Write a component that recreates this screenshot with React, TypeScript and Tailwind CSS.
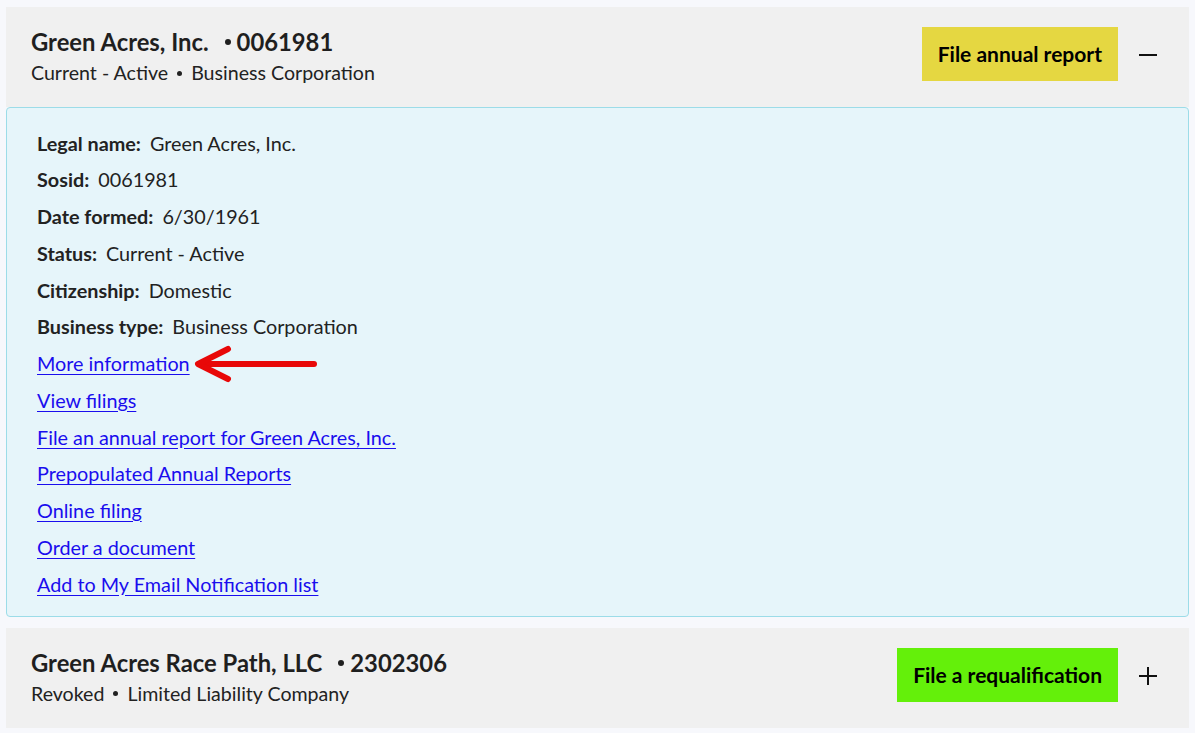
import { ReactNode } from 'react'

interface Entity {
  name: string
  sosid: string
  status: string
  type: string
  action: string
  actionClass: string
  open: boolean
}

const entities: Entity[] = [
  {
    name: 'Green Acres, Inc.',
    sosid: '0061981',
    status: 'Current - Active',
    type: 'Business Corporation',
    action: 'File annual report',
    actionClass: 'bg-[#e5d741]',
    open: true,
  },
  {
    name: 'Green Acres Race Path, LLC',
    sosid: '2302306',
    status: 'Revoked',
    type: 'Limited Liability Company',
    action: 'File a requalification',
    actionClass: 'bg-[#64f00a]',
    open: false,
  },
]

const details = [
  ['Legal name', 'Green Acres, Inc.'],
  ['Sosid', '0061981'],
  ['Date formed', '6/30/1961'],
  ['Status', 'Current - Active'],
  ['Citizenship', 'Domestic'],
  ['Business type', 'Business Corporation'],
]

const links = [
  'More information',
  'View filings',
  'File an annual report for Green Acres, Inc.',
  'Prepopulated Annual Reports',
  'Online filing',
  'Order a document',
  'Add to My Email Notification list',
]

function ToggleIcon({ open }: { open: boolean }) {
  return (
    <svg width="20" height="20" viewBox="0 0 20 20" className="text-[#111]">
      <line x1="1" y1="10" x2="19" y2="10" stroke="currentColor" strokeWidth="2" />
      {!open && <line x1="10" y1="1" x2="10" y2="19" stroke="currentColor" strokeWidth="2" />}
    </svg>
  )
}

function PointerArrow() {
  // red annotation arrow pointing left at the link
  return (
    <svg width="126" height="40" viewBox="0 0 126 40" className="absolute left-[100%] top-1/2 -translate-y-1/2 ml-[4px]">
      <g stroke="#e80808" strokeWidth="6" strokeLinecap="round" strokeLinejoin="round" fill="none">
        <line x1="6" y1="20" x2="120" y2="20" />
        <polyline points="34,5 4,20 34,35" />
      </g>
    </svg>
  )
}

function Row({ children }: { children: ReactNode }) {
  return <div className="h-[36.75px] flex items-center">{children}</div>
}

function EntityCard({ entity }: { entity: Entity }) {
  return (
    <div>
      <div className="bg-[#f0f0f0] flex items-start pl-[25px] pr-[31px] pt-[20px] h-[100px]">
        <div className="flex-1">
          <div className="flex items-center text-[23.8px] font-bold leading-[30px] text-[#1f1f1f]">
            <span>{entity.name}</span>
            <span className="ml-[16px] mr-[6px] w-[6px] h-[6px] rounded-full bg-current" />
            <span>{entity.sosid}</span>
          </div>
          <div className="flex items-center text-[19.6px] leading-[32px] text-[#222]">
            <span>{entity.status}</span>
            <span className="mx-[9px] w-[5px] h-[5px] rounded-full bg-current" />
            <span>{entity.type}</span>
          </div>
        </div>
        <button className={`${entity.actionClass} h-[54px] px-[16px] text-[21px] font-bold text-black`}>
          {entity.action}
        </button>
        <div className="ml-[20px] mt-[18px]">
          <ToggleIcon open={entity.open} />
        </div>
      </div>
      {entity.open && (
        <div className="bg-[#e6f5fa] border border-[#9cdce8] rounded-[4px] pl-[30px] pt-[17px] pb-[13px] text-[19.8px] text-[#222]">
          {details.map(([label, value]) => (
            <Row key={label}>
              <span className="font-bold mr-[9px]">{label}:</span>
              <span>{value}</span>
            </Row>
          ))}
          {links.map((link, i) => (
            <Row key={link}>
              <span className="relative">
                <a href="#" className="text-[#1a0dee] underline underline-offset-[3px]">
                  {link}
                </a>
                {i === 0 && <PointerArrow />}
              </span>
            </Row>
          ))}
        </div>
      )}
    </div>
  )
}

export default function App() {
  return (
    <div
      className="min-h-[733px] bg-[#f7f8fc] px-[6px] pt-[7px] flex flex-col gap-[11px]"
      style={{ fontFamily: '"Lato", "Liberation Sans", sans-serif' }}
    >
      {entities.map((e) => (
        <EntityCard key={e.sosid} entity={e} />
      ))}
    </div>
  )
}
